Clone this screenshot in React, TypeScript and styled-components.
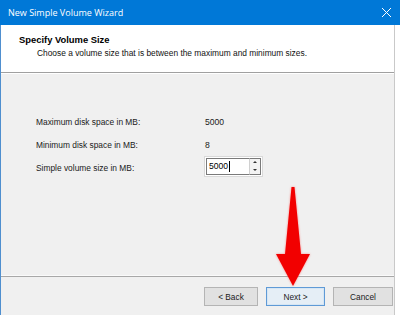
import { Fragment } from 'react';
import styled, { createGlobalStyle } from 'styled-components';

const GlobalStyle = createGlobalStyle`
	html, body {
		margin: 0;
		padding: 0;
		background: #ffffff;
	}
	* {
		box-sizing: border-box;
	}
`;

const Window = styled.div`
	position: relative;
	width: 400px;
	height: 315px;
	overflow: hidden;
	display: flex;
	flex-direction: column;
	font-family: "Liberation Sans", Arial, sans-serif;
	color: #000000;
`;

const TitleBar = styled.div`
	height: 25px;
	flex: none;
	background: #0078d7;
	display: flex;
	align-items: center;
	justify-content: space-between;
	padding: 0 7px 1px 8px;
`;

const TitleText = styled.div`
	font-family: "Open Sans", "Noto Sans", sans-serif;
	font-size: 9px;
	color: #ffffff;
`;

const CloseIcon = styled.svg`
	width: 11px;
	height: 11px;
	margin-right: 1px;
`;

const Frame = styled.div`
	flex: 1;
	display: flex;
	flex-direction: column;
	margin-right: 5px;
	border-left: 1px solid #4f8fcf;
	border-right: 1px solid #c9c9c9;
`;

const Header = styled.div`
	height: 47px;
	flex: none;
	background: #ffffff;
	padding: 9px 0 0 18px;
`;

const Heading = styled.div`
	font-size: 9.4px;
	font-weight: bold;
	line-height: 12px;
`;

const Subtitle = styled.div`
	font-size: 8.4px;
	line-height: 12px;
	margin-left: 18px;
	margin-top: 1px;
	color: #111111;
`;

const Rule = styled.div`
	height: 2px;
	flex: none;
	border-top: 1px solid #a0a0a0;
	border-bottom: 1px solid #ffffff;
`;

const Body = styled.div`
	flex: 1;
	background: #f0f0f0;
	padding: 36px 0 0 35px;
	display: grid;
	grid-template-columns: 168px auto;
	grid-auto-rows: 23px;
	align-content: start;
	align-items: center;
`;

const Label = styled.div`
	font-size: 8.4px;
	color: #1a1a1a;
`;

const Value = styled.div`
	font-size: 8.6px;
	color: #1a1a1a;
	padding-left: 1px;
`;

const Spinner = styled.div`
	width: 59px;
	height: 21px;
	display: flex;
	border: 1px solid #d9d9d9;
	background: #ffffff;
	padding: 1px;
	margin-top: -3px;
`;

const SpinInput = styled.div`
	flex: 1;
	display: flex;
	align-items: center;
	padding-left: 2px;
	font-size: 8.6px;
	border: 1px solid #7a7a7a;
	border-right: none;
`;

const Caret = styled.span`
	display: inline-block;
	width: 1px;
	height: 11px;
	background: #000000;
	margin-left: 1px;
`;

const SpinButtons = styled.div`
	width: 12px;
	display: flex;
	flex-direction: column;
	border: 1px solid #7a7a7a;
	border-left: 1px solid #d0d0d0;
	background: #f3f3f3;
`;

const SpinHalf = styled.div<{ $down?: boolean }>`
	flex: 1;
	display: flex;
	align-items: center;
	justify-content: center;
	&::after {
		content: '';
		border-left: 2px solid transparent;
		border-right: 2px solid transparent;
		${(props) => props.$down
		? 'border-top: 2px solid #333333;'
		: 'border-bottom: 2px solid #333333;'}
	}
`;

const FooterRule = styled.div`
	height: 2px;
	flex: none;
	background: #f0f0f0;
	border-top: 1px solid #fafafa;
	border-bottom: 1px solid #a8a8a8;
`;

const Footer = styled.div`
	height: 38px;
	flex: none;
	background: #f0f0f0;
	display: flex;
	justify-content: flex-end;
	align-items: flex-start;
	padding: 10px 1px 0 0;
	gap: 8px;
`;

const Button = styled.div<{ $width: number; $primary?: boolean }>`
	width: ${(props) => props.$width}px;
	height: 19px;
	display: flex;
	align-items: center;
	justify-content: center;
	font-size: 8.3px;
	color: #1a1a1a;
	background: ${(props) => props.$primary ? '#e5eef6' : '#e1e1e1'};
	border: 1px solid ${(props) => props.$primary ? '#5f9ad6' : '#b4b4b4'};
	box-shadow: ${(props) => props.$primary ? 'inset 0 0 0 1px #d6e6f4' : 'none'};
`;

const Arrow = styled.svg`
	position: absolute;
	left: 276px;
	top: 187px;
	width: 34px;
	height: 100px;
	filter: drop-shadow(0 0 1px rgba(255, 80, 80, 0.6));
`;

const rows = [
	{ label: 'Maximum disk space in MB:', value: '5000' },
	{ label: 'Minimum disk space in MB:', value: '8' },
];

export default function App() {
	return (
		<Fragment>
			<GlobalStyle />
			<Window>
				<TitleBar>
					<TitleText>New Simple Volume Wizard</TitleText>
					<CloseIcon viewBox="0 0 11 11">
						<path d="M1 1 L10 10 M10 1 L1 10" stroke="#ffffff" strokeWidth="1" fill="none" />
					</CloseIcon>
				</TitleBar>
				<Frame>
					<Header>
						<Heading>Specify Volume Size</Heading>
						<Subtitle>Choose a volume size that is between the maximum and minimum sizes.</Subtitle>
					</Header>
					<Rule />
					<Body>
						{rows.map((row) => (
							<Fragment key={row.label}>
								<Label>{row.label}</Label>
								<Value>{row.value}</Value>
							</Fragment>
						))}
						<Label>Simple volume size in MB:</Label>
						<Spinner>
							<SpinInput>5000<Caret /></SpinInput>
							<SpinButtons>
								<SpinHalf />
								<SpinHalf $down />
							</SpinButtons>
						</Spinner>
					</Body>
					<FooterRule />
					<Footer>
						<Button $width={54}>&lt; Back</Button>
						<Button $width={59} $primary>Next &gt;</Button>
						<Button $width={60}>Cancel</Button>
					</Footer>
				</Frame>
				<Arrow viewBox="0 0 34 100">
					<polygon points="15.5,0 18.5,0 25,67 34,67 17,99 0,67 9,67" fill="#f20000" />
				</Arrow>
			</Window>
		</Fragment>
	);
}
